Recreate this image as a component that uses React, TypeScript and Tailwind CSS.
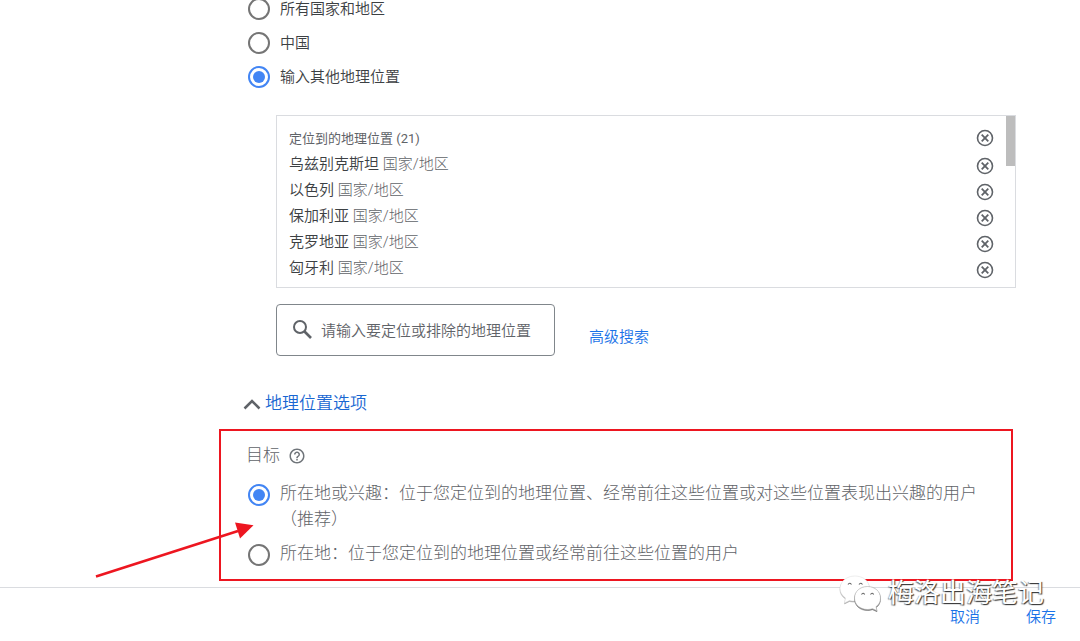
import React, { useState } from "react";
import clsx from "clsx";

const locations = ["乌兹别克斯坦", "以色列", "保加利亚", "克罗地亚", "匈牙利"];

const regionOptions = [
  { value: "all", label: "所有国家和地区" },
  { value: "china", label: "中国" },
  { value: "custom", label: "输入其他地理位置" },
];

const targetOptions = [
  {
    value: "interest",
    label:
      "所在地或兴趣：位于您定位到的地理位置、经常前往这些位置或对这些位置表现出兴趣的用户（推荐）",
  },
  {
    value: "presence",
    label: "所在地：位于您定位到的地理位置或经常前往这些位置的用户",
  },
];

type RadioOptionProps = {
  name: string;
  label: string;
  checked: boolean;
  onChange: () => void;
  large?: boolean;
};

const RadioOption = ({ name, label, checked, onChange, large }: RadioOptionProps) => (
  <label
    className={clsx(
      "flex gap-2.5 cursor-pointer",
      large
        ? "items-start text-[17px] leading-[26px] font-light text-[#5f6368]"
        : "h-[34px] items-center text-[15px] font-[350] text-[#3c4043]"
    )}
  >
    <input
      type="radio"
      name={name}
      checked={checked}
      onChange={onChange}
      className={clsx(
        "size-[22px] shrink-0 appearance-none rounded-full border-2 border-[#757575] bg-clip-content p-[3px] checked:border-[#4285f4] checked:bg-[#4285f4]",
        large && "mt-1"
      )}
    />
    <span>{label}</span>
  </label>
);

const RemoveButton = ({ label }: { label: string }) => (
  <button type="button" aria-label={label} className="text-[#5f6368] cursor-pointer">
    <svg width="18" height="18" viewBox="0 0 18 18" fill="none" stroke="currentColor" strokeWidth="1.6">
      <circle cx="9" cy="9" r="7.5" />
      <path d="M5.700 5.700l6.600 6.600M12.300 5.700l-6.600 6.600" strokeWidth="1.8" />
    </svg>
  </button>
);

const LocationList = () => (
  <div className="relative border border-[#dadce0] pt-[9px] pb-1.5 pl-3 pr-[21px]">
    <div className="flex h-[26px] items-center justify-between text-[13px] text-[#5f6368]">
      <span className="pt-0.5">定位到的地理位置 (21)</span>
      <RemoveButton label="全部移除" />
    </div>
    <ul>
      {locations.map((name) => (
        <li key={name} className="flex h-[26px] items-center justify-between text-[15px]">
          <span className="font-[350] text-[#3c4043]">
            {name} <span className="font-light text-[#5f6368]">国家/地区</span>
          </span>
          <span className="flex pt-1">
            <RemoveButton label={`移除${name}`} />
          </span>
        </li>
      ))}
    </ul>
    {/* scroll thumb */}
    <div className="absolute right-0 top-0 h-[50px] w-[9px] bg-[#bdbdbd]" />
  </div>
);

const Arrow = () => (
  <svg
    className="pointer-events-none absolute -left-[131px] top-[81px]"
    width="180"
    height="80"
    viewBox="0 0 180 80"
    aria-hidden="true"
  >
    <path d="M6 64.5L148 19" stroke="#ed1620" strokeWidth="2.6" />
    <path d="M145 10.500l18.500 2.800L150 26.500z" fill="#ed1620" />
  </svg>
);

const Watermark = () => (
  <div className="pointer-events-none absolute bottom-[29px] right-9 flex items-center gap-1.5">
    <svg width="44" height="38" viewBox="0 0 44 38" aria-hidden="true">
      <g className="drop-shadow-[0_1px_0_#aaa]">
        <path
          d="M17 2C8 2 2 8 2 14.500c0 4 2 7 5.500 9.500L6.500 29l5-2.500c8 2 20-1 20-12C31.500 7 25 2 17 2z"
          fill="#fff"
          stroke="#ddd"
          strokeWidth="0.5"
        />
      </g>
      <g className="drop-shadow-[0_1px_0_#777]">
        <path
          d="M29.500 12.500c-7.500 0-13 5-13 11.500s5.500 11.500 13 11.500c2 0 3.500-.3 5-.8l4.500 2-1-4c3-2 4.500-5 4.500-8.700 0-6.500-5.500-11.500-13-11.500z"
          fill="#fff"
          stroke="#aaa"
          strokeWidth="0.6"
        />
      </g>
      <path
        d="M10 10.500q1.500-2.500 3.500 0M21 10.500q1.500-2.500 3.500 0M23.500 20.500q1.500-2.500 3.200 0M32.500 20.500q1.500-2.500 3.200 0"
        fill="none"
        stroke="#666"
        strokeWidth="1.100"
      />
    </svg>
    <span className="text-[26px] leading-[26px] text-white [text-shadow:1px_1px_1px_#333,-1px_1px_1px_#999]">
      梅洛出海笔记
    </span>
  </div>
);

const App = () => {
  const [region, setRegion] = useState("custom");
  const [target, setTarget] = useState("interest");
  const [open, setOpen] = useState(true);

  return (
    <div className="relative min-h-screen overflow-hidden bg-white font-[Roboto,'Noto_Sans_CJK_SC',sans-serif]">
      <main className="-mt-2 pl-[219px] pr-16">
        <fieldset className="pl-[29px]">
          {regionOptions.map((option) => (
            <RadioOption
              key={option.value}
              name="region"
              label={option.label}
              checked={region === option.value}
              onChange={() => setRegion(option.value)}
            />
          ))}
        </fieldset>

        <div className="mt-[21px] pl-[57px]">
          <LocationList />

          <div className="mt-4 flex items-end gap-[34px]">
            <label className="flex h-[52px] w-[279px] items-center gap-1.5 rounded border border-[#80868b] pl-3.5 pr-3">
              <svg width="24" height="24" viewBox="0 0 24 24" fill="none" stroke="#5f6368" aria-hidden="true">
                <circle cx="9" cy="9" r="6" strokeWidth="2" />
                <path d="M13.500 13.500l6.500 6.500" strokeWidth="2.600" />
              </svg>
              <input
                type="text"
                aria-label="地理位置"
                placeholder="请输入要定位或排除的地理位置"
                className="min-w-0 flex-1 pt-0.5 text-[15px] font-[350] outline-none placeholder:text-[#5f6368]"
              />
            </label>
            <a href="#" className="pb-2 text-[15px] font-[350] text-[#1a73e8]">
              高级搜索
            </a>
          </div>
        </div>

        <button
          type="button"
          aria-expanded={open}
          onClick={() => setOpen(!open)}
          className="mt-[35px] ml-6 flex h-[26px] cursor-pointer items-center gap-1 text-[17px] font-[350] text-[#1967d2]"
        >
          <svg width="18" height="18" viewBox="0 0 18 18" fill="none" aria-hidden="true">
            <path d="M1.500 13.500L9 6l7.500 7.500" stroke="#5f6368" strokeWidth="2.500" />
          </svg>
          地理位置选项
        </button>

        {open && (
          <fieldset className="relative mt-3 mr-[3px] border-2 border-[#ed1620] pt-3 pb-[13px] pl-[27px] pr-6">
            <div className="-ml-0.5 flex h-[26px] items-center gap-2 text-[17px] font-light text-[#5f6368]">
              <span>目标</span>
              <svg width="18" height="18" viewBox="0 0 24 24" fill="#70757a" aria-hidden="true">
                <path d="M11 18h2v-2h-2v2zm1-16C6.480 2 2 6.480 2 12s4.480 10 10 10 10-4.480 10-10S17.520 2 12 2zm0 18c-4.410 0-8-3.590-8-8s3.590-8 8-8 8 3.590 8 8-3.590 8-8 8zm0-14c-2.210 0-4 1.790-4 4h2c0-1.100.9-2 2-2s2 .9 2 2c0 2-3 1.750-3 5h2c0-2.250 3-2.500 3-5 0-2.210-1.790-4-4-4z" />
              </svg>
            </div>
            <div className="mt-[11px] flex flex-col gap-2">
              {targetOptions.map((option) => (
                <RadioOption
                  key={option.value}
                  name="target"
                  label={option.label}
                  checked={target === option.value}
                  onChange={() => setTarget(option.value)}
                  large
                />
              ))}
            </div>
            <Arrow />
          </fieldset>
        )}
      </main>

      <footer className="mt-1.5 flex justify-end gap-[46px] border-t border-[#dadce0] pt-5 pr-6 text-[15px] font-[350] text-[#1a73e8]">
        <button type="button" className="cursor-pointer leading-[18px]">
          取消
        </button>
        <button type="button" className="cursor-pointer leading-[18px]">
          保存
        </button>
      </footer>

      <Watermark />
    </div>
  );
};

export default App;
